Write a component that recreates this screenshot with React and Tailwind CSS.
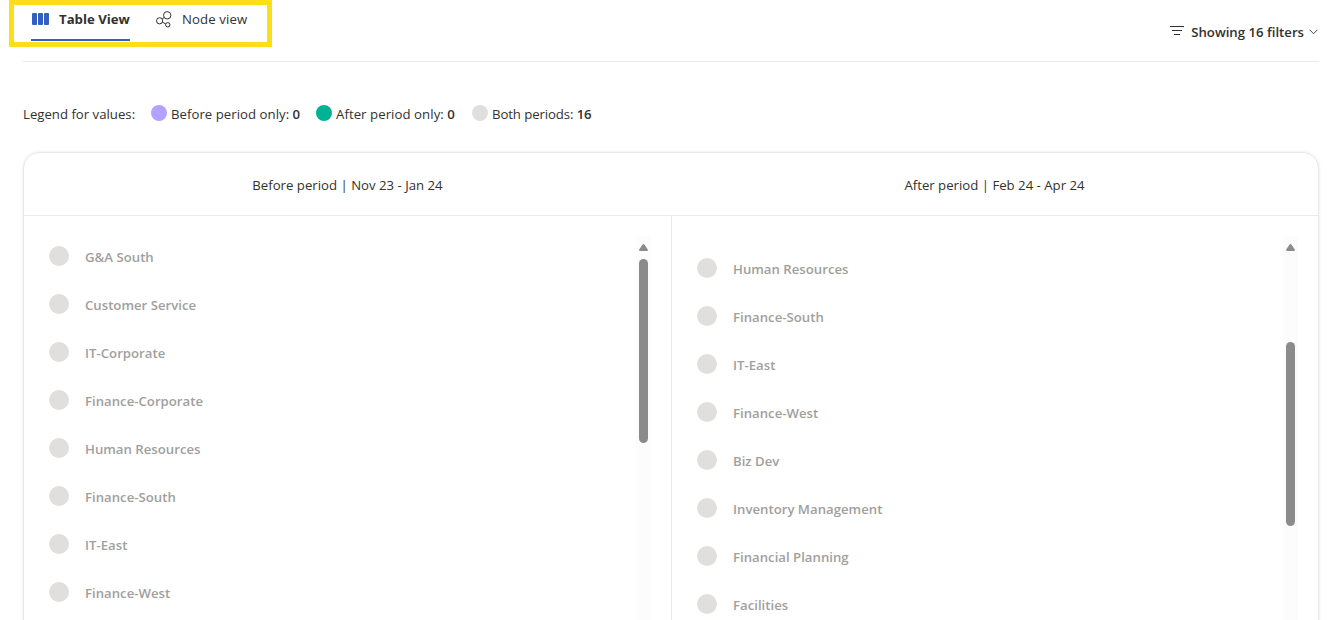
const beforeItems = [
  "G&A South",
  "Customer Service",
  "IT-Corporate",
  "Finance-Corporate",
  "Human Resources",
  "Finance-South",
  "IT-East",
  "Finance-West",
];

const afterItems = [
  "Human Resources",
  "Finance-South",
  "IT-East",
  "Finance-West",
  "Biz Dev",
  "Inventory Management",
  "Financial Planning",
  "Facilities",
];

function TableIcon() {
  return (
    <svg width="17" height="12" viewBox="0 0 17 12" fill="#355ec3" className="shrink-0">
      <rect x="0" y="0" width="5" height="12" rx="1" />
      <rect x="6" y="0" width="5" height="12" rx="1" />
      <rect x="12" y="0" width="5" height="12" rx="1" />
    </svg>
  );
}

function NodeIcon() {
  return (
    <svg width="16" height="17" viewBox="0 0 16 17" fill="none" stroke="#323130" strokeWidth="1" className="shrink-0">
      <circle cx="11.2" cy="4.3" r="3.7" />
      <circle cx="3.6" cy="9.8" r="3.1" />
      <circle cx="11.8" cy="13.8" r="2.2" />
      <path d="M6.2 8L8.2 6.5M6.4 11.2L9.8 12.9" />
    </svg>
  );
}

function LegendItem({ dot, label, value, className }) {
  return (
    <div className={`flex items-center ${className}`}>
      <span className={`-mt-0.5 mr-1 size-4 shrink-0 rounded-full ${dot}`} />
      <span className="whitespace-pre">
        {label} <b className="font-semibold">{value}</b>
      </span>
    </div>
  );
}

function Scrollbar({ thumb, className }) {
  return (
    <div className={`flex h-[400px] w-[15px] shrink-0 flex-col items-center bg-[#fcfcfc] pt-2 ${className}`}>
      <svg width="9" height="7" viewBox="0 0 9 7" fill="#8b8b8b" className="shrink-0">
        <path d="M4.5 0Q5.1 0 5.6 .8L8.8 5.6Q9.2 7 8 7H1Q-.2 7 .2 5.6L3.4 .8Q3.9 0 4.5 0Z" />
      </svg>
      <div className={`h-[184px] w-[9px] shrink-0 rounded-full bg-[#8b8b8b] ${thumb}`} />
    </div>
  );
}

function ItemList({ items, className }) {
  return (
    <ul className={`flex flex-1 flex-col gap-7 ${className}`}>
      {items.map((name) => (
        <li key={name} className="flex h-5 items-center gap-4">
          <span className="size-5 shrink-0 rounded-full bg-[#e0dfde]" />
          <span className="mt-0.5 text-[13.2px] font-semibold leading-5 text-[#a19f9d]">{name}</span>
        </li>
      ))}
    </ul>
  );
}

export default function App() {
  return (
    <div className="h-[620px] w-[1333px] overflow-hidden bg-white font-['Open_Sans','Noto_Sans',sans-serif] text-[13.2px] leading-5 text-[#323130]">
      <header className="ml-[23px] flex h-[62px] w-[1296px] items-start justify-between border-b border-[#eaeaea]">
        <nav className="-ml-[14px] flex h-[47px] w-[263px] items-start border-5 border-[#fcdf19] pl-[17px]">
          <div className="flex h-9 w-[99px] items-start border-b-2 border-[#355ec3] pl-px pt-1">
            <div className="flex h-5 items-center gap-2.5">
              <TableIcon />
              <span className="whitespace-nowrap font-bold">Table View</span>
            </div>
          </div>
          <div className="ml-[26px] mt-1 flex h-5 items-center gap-2.5">
            <NodeIcon />
            <span className="whitespace-nowrap tracking-[0.1px]">Node view</span>
          </div>
        </nav>
        <div className="mt-[22px] flex h-5 items-center">
          <svg width="14" height="9" viewBox="0 0 14 9" stroke="#323130" className="-mt-[3px] mr-[7px]">
            <path d="M0 .5H14M2 4.5H12M4 8.5H10" />
          </svg>
          <span className="whitespace-nowrap font-semibold">Showing 16 filters</span>
          <svg width="9" height="6" viewBox="0 0 9 6" fill="none" stroke="#484644" className="ml-[5px] mr-px">
            <path d="M.5 .7L4.5 4.7L8.5 .7" />
          </svg>
        </div>
      </header>

      <div className="ml-[23px] mt-[42px] flex h-5 items-center">
        <span className="w-32 whitespace-nowrap">Legend for values:</span>
        <LegendItem dot="bg-[#b5a1ff]" label="Before period only:" value="0" className="w-[165px] tracking-[0.03px]" />
        <LegendItem dot="bg-[#00b294]" label="After period only:" value="0" className="w-[156px] tracking-[0.06px]" />
        <LegendItem dot="bg-[#e0dfde]" label="Both periods:" value="16" className="tracking-[-0.1px]" />
      </div>

      <section className="ml-[23px] mt-7 h-[520px] w-[1296px] rounded-2xl border border-[#e8e8e8] shadow-[0_0_3px_rgba(0,0,0,0.1)]">
        <div className="flex h-[63px] items-center border-b border-[#eaeaea] pt-0.5">
          <div className="w-[647px] text-center">Before period | Nov 23 - Jan 24</div>
          <div className="flex-1 text-center">After period | Feb 24 - Apr 24</div>
        </div>
        <div className="flex">
          <div className="flex h-[460px] w-[648px] border-r border-[#eaeaea] pl-[25px]">
            <ItemList items={beforeItems} className="pt-[30px]" />
            <Scrollbar thumb="mt-2" className="mr-5 mt-5" />
          </div>
          <div className="flex h-[460px] flex-1 pl-[25px]">
            <ItemList items={afterItems} className="pt-[42px]" />
            <Scrollbar thumb="mt-[91px]" className="mr-5 mt-5" />
          </div>
        </div>
      </section>
    </div>
  );
}
